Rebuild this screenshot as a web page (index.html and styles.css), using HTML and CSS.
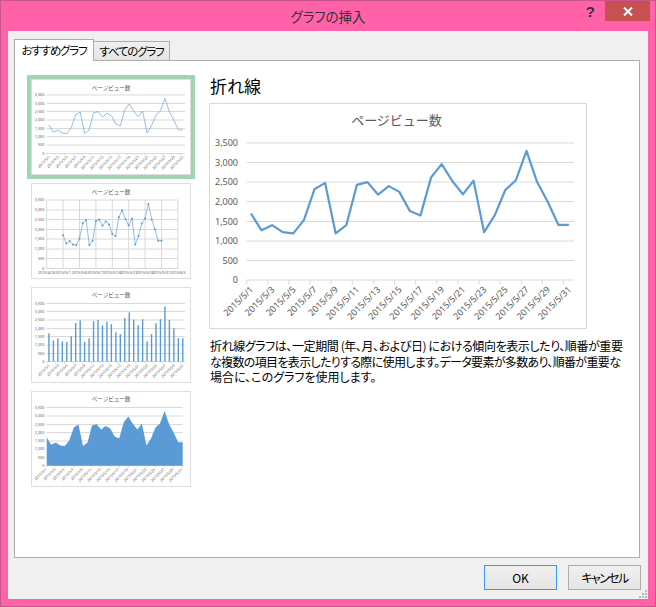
FILE: index.html
```html
<!DOCTYPE html>
<html lang="ja">
<head>
    <meta charset="UTF-8">
    <title>グラフの挿入</title>
    <link rel="stylesheet" href="styles.css">
</head>
<body>
    <div class="window">
        <div class="titlebar">
            <span></span>
            <span class="window-title">グラフの挿入</span>
            <div class="window-controls">
                <span class="help-btn">?</span>
                <span class="close-btn">
                    <svg width="10" height="9" viewBox="0 0 10 9"><path d="M1 .5 9 8.5M9 .5 1 8.5" stroke="#fff" stroke-width="2" fill="none"/></svg>
                </span>
            </div>
        </div>

        <div class="client">
            <div class="tabs">
                <div class="tab active">おすすめグラフ</div>
                <div class="tab">すべてのグラフ</div>
            </div>

            <div class="pane">
                <div class="thumbs">
                    <div class="thumb selected" data-kind="line"></div>
                    <div class="thumb" data-kind="marker"></div>
                    <div class="thumb" data-kind="bar"></div>
                    <div class="thumb" data-kind="area"></div>
                </div>
                <div class="detail">
                    <h2 class="detail-title">折れ線</h2>
                    <div class="chart-box" data-kind="big"></div>
                    <p class="description">
                        <span>折れ線グラフは、一定期間 (年、月、および日) における傾向を表示したり、順番が重要</span>
                        <span>な複数の項目を表示したりする際に使用します。データ要素が多数あり、順番が重要な</span>
                        <span>場合に、このグラフを使用します。</span>
                    </p>
                </div>
            </div>

            <div class="footer">
                <button class="btn default">OK</button>
                <button class="btn cancel">キャンセル</button>
            </div>

            <svg class="grip" width="9" height="8" viewBox="0 0 9 8">
                <path d="M6 0h2v2H6zM3 3h2v2H3zM6 3h2v2H6zM0 6h2v2H0zM3 6h2v2H3zM6 6h2v2H6z" fill="#b9b9b9"/>
            </svg>
        </div>
    </div>
    <script src="charts.js"></script>
</body>
</html>
```
FILE: styles.css
```css
* {
    box-sizing: border-box;
}

body {
    margin: 0;
    font-family: "Noto Sans CJK JP", "Noto Sans", sans-serif;
    font-feature-settings: "palt";
    font-size: 12px;
    color: #000;
}

.window {
    width: 656px;
    height: 607px;
    display: flex;
    flex-direction: column;
    background: #ff62a8;
    border: 1px solid #c9558c;
}

/* title bar */
.titlebar {
    height: 30px;
    flex: none;
    display: grid;
    grid-template-columns: 1fr auto 1fr;
}

.window-title {
    font-size: 13.5px;
    line-height: 30px;
    color: #333;
}

.window-controls {
    display: flex;
    justify-content: flex-end;
    align-items: flex-start;
    padding-right: 5px;
}

.help-btn {
    font-family: "Liberation Sans", sans-serif;
    font-weight: bold;
    font-size: 15px;
    line-height: 21px;
    color: #333;
    margin-right: 10px;
}

.close-btn {
    width: 45px;
    height: 20px;
    background: #c75050;
    display: flex;
    align-items: center;
    justify-content: center;
}

/* client area */
.client {
    flex: 1;
    position: relative;
    margin: 0 7px 7px;
    padding: 8px 7px 0 6px;
    background: #f0f0f0;
    display: flex;
    flex-direction: column;
}

.tabs {
    height: 21px;
    flex: none;
    display: flex;
    align-items: flex-end;
}

.tab {
    width: 76px;
    height: 19px;
    font-size: 11.5px;
    letter-spacing: -1.2px;
    line-height: 18px;
    text-align: center;
    white-space: nowrap;
    border: 1px solid #acacac;
    border-bottom: none;
    border-left: none;
    background: linear-gradient(#f0f0f0, #e5e5e5);
}

.tab.active {
    width: 80px;
    height: 22px;
    line-height: 20px;
    margin-bottom: -1px;
    border-left: 1px solid #acacac;
    background: #fff;
    position: relative;
}

.pane {
    flex: 1;
    margin-right: 1px;
    padding: 14px 16px 0;
    background: #fff;
    border: 1px solid #acacac;
    display: flex;
    gap: 18px;
}

/* chart list */
.thumbs {
    width: 160px;
    flex: none;
    padding-top: 4px;
    display: flex;
    flex-direction: column;
    gap: 8px;
}

.thumb {
    width: 160px;
    height: 96px;
    background: #fff;
    border: 1px solid #dedede;
}

.thumb.selected {
    outline: 4px solid #a0d4b3;
}

.thumb svg,
.chart-box svg {
    display: block;
}

.thumb .series {
    stroke-opacity: 0.8;
}

/* preview */
.detail {
    flex: 1;
}

.detail-title {
    margin: 0;
    height: 28px;
    font-size: 17px;
    font-weight: normal;
    line-height: 22px;
    padding-left: 1px;
}

.chart-box {
    width: 378px;
    height: 226px;
    background: #fff;
    border: 1px solid #d9d9d9;
}

.description {
    margin: 9px 0 0;
    padding-left: 1px;
    line-height: 15.5px;
    white-space: nowrap;
}

.description span {
    display: block;
}

.description span:nth-child(1) {
    letter-spacing: -0.41px;
}

.description span:nth-child(2) {
    letter-spacing: -0.66px;
}

/* svg chart parts */
.grid-line {
    stroke: #d9d9d9;
    stroke-width: 1;
}

.series {
    fill: none;
    stroke: #5b9bd5;
    stroke-linejoin: round;
}

.fill-blue {
    fill: #5b9bd5;
}

.chart-title {
    fill: #595959;
    text-anchor: middle;
    font-feature-settings: normal;
}

.axis-label {
    fill: #595959;
    font-family: "Noto Sans", sans-serif;
}

/* footer */
.footer {
    height: 41px;
    flex: none;
    padding-top: 7px;
    display: flex;
    justify-content: flex-end;
    gap: 11px;
}

.btn {
    width: 73px;
    height: 25px;
    padding: 0;
    font-family: inherit;
    font-size: 12px;
    font-feature-settings: inherit;
    color: #000;
    background: linear-gradient(#f0f0f0, #e5e5e5);
    border: 1px solid #acacac;
}

.btn.default {
    border: 1px solid #3399ff;
}

.btn.cancel {
    letter-spacing: -1.6px;
}

.grip {
    position: absolute;
    right: 0;
    bottom: 1px;
}
```
FILE: charts.js
```js
// page views per day, 2015/5/1 - 2015/5/31
var data = [1700, 1270, 1400, 1220, 1190, 1530, 2320, 2480, 1190, 1400, 2430, 2500, 2180, 2400, 2250, 1760,
    1650, 2620, 2960, 2530, 2190, 2540, 1220, 1650, 2300, 2550, 3300, 2500, 2000, 1410, 1410];

var configs = {
    big: { w: 376, h: 224, l: 36.7, r: 364, t: 39, b: 176, titleSize: 13, titleX: 186.5, titleY: 21, labelSize: 9, gap: 8.7, lx: 3, ly: 10, line: 2.2, first: 40.9, step: 10.6 },
    line: { w: 158, h: 94, l: 14.7, r: 153, t: 15, b: 73.3, titleSize: 5.5, titleY: 10, labelSize: 3.7, gap: 2.4, lx: 1.2, ly: 4, line: 0.8 },
    marker: { w: 158, h: 94, l: 14.7, r: 146, t: 16, b: 84.3, titleSize: 5.5, titleY: 10, labelSize: 3.7, gap: 2.4, lx: 1.2, ly: 4, line: 0.8 },
    bar: { w: 158, h: 94, l: 14.7, r: 153, t: 15.3, b: 73.7, titleSize: 5.5, titleY: 8.5, labelSize: 3.7, gap: 2.4, lx: 1.2, ly: 4 },
    area: { w: 158, h: 94, l: 14.7, r: 150.7, t: 15.7, b: 73.7, titleSize: 5.5, titleY: 9, labelSize: 3.7, gap: 2.4, lx: 0, ly: 4 }
};

function buildChart(kind, c) {
    var band = (c.r - c.l) / 31;
    var out = [];
    var i;

    function y(v) {
        return c.b - (c.b - c.t) * v / 3500;
    }

    function xAt(day) {
        if (c.first) return c.first + c.step * day;
        if (kind == 'area') return c.l + (c.r - c.l) * day / 30;
        if (kind == 'marker') return c.l + 16.4 + 3.28 * day;
        return c.l + band * (day + 0.5);
    }

    out.push('<text class="chart-title" x="' + (c.titleX || c.w / 2) + '" y="' + c.titleY + '" font-size="' + c.titleSize + '">ページビュー数</text>');

    // horizontal grid and value labels
    for (i = 0; i <= 7; i++) {
        var v = i * 500;
        var gy = Math.round(y(v) * 2) / 2;
        var text = v >= 1000 ? Math.floor(v / 1000) + ',' + (v % 1000 == 0 ? '000' : '500') : String(v);
        out.push('<line class="grid-line" x1="' + c.l + '" x2="' + c.r + '" y1="' + gy + '" y2="' + gy + '"/>');
        out.push('<text class="axis-label" text-anchor="end" x="' + (c.l - c.gap) + '" y="' + (gy + c.labelSize * 0.36) + '" font-size="' + c.labelSize + '">' + text + '</text>');
    }

    if (kind == 'marker') {
        // date axis, a grid line every five days
        var names = ['4/26', '5/1', '5/6', '5/11', '5/16', '5/21', '5/26', '5/31', '6/5'];
        for (i = 0; i < names.length; i++) {
            var gx = c.l + 16.4 * i;
            out.push('<line class="grid-line" x1="' + gx + '" x2="' + gx + '" y1="' + c.t + '" y2="' + c.b + '"/>');
            out.push('<text class="axis-label" text-anchor="middle" x="' + gx + '" y="' + (c.b + 6) + '" font-size="3.7">2015/' + names[i] + '</text>');
        }
    } else {
        // category axis, a tick and a slanted label every second day
        for (i = 0; i < 31; i += 2) {
            var tick = kind == 'area' ? xAt(i) : c.l + band * i;
            var cx = xAt(i);
            var lx = cx + c.lx;
            var ly = c.b + c.ly;
            out.push('<line class="grid-line" x1="' + tick + '" x2="' + tick + '" y1="' + c.b + '" y2="' + (c.b + c.ly * 0.45) + '"/>');
            out.push('<text class="axis-label" text-anchor="end" transform="rotate(-45 ' + lx + ' ' + ly + ')" x="' + lx + '" y="' + ly + '" font-size="' + c.labelSize + '">2015/5/' + (i + 1) + '</text>');
        }
    }

    if (kind == 'bar') {
        data.forEach(function (d, n) {
            out.push('<rect class="fill-blue" x="' + (xAt(n) - 0.7) + '" y="' + y(d) + '" width="1.4" height="' + (c.b - y(d)) + '"/>');
        });
    } else {
        var pts = data.map(function (d, n) {
            return xAt(n).toFixed(1) + ',' + y(d).toFixed(1);
        });
        if (kind == 'area') {
            out.push('<polygon class="fill-blue" points="' + c.l + ',' + c.b + ' ' + pts.join(' ') + ' ' + c.r + ',' + c.b + '"/>');
        } else {
            out.push('<polyline class="series" stroke-width="' + c.line + '" points="' + pts.join(' ') + '"/>');
        }
        if (kind == 'marker') {
            data.forEach(function (d, n) {
                out.push('<circle class="fill-blue" cx="' + xAt(n) + '" cy="' + y(d) + '" r="1"/>');
            });
        }
    }

    return '<svg width="' + c.w + '" height="' + c.h + '" viewBox="0 0 ' + c.w + ' ' + c.h + '">' + out.join('') + '</svg>';
}

document.querySelectorAll('[data-kind]').forEach(function (el) {
    var kind = el.getAttribute('data-kind');
    el.innerHTML = buildChart(kind, configs[kind]);
});
```
